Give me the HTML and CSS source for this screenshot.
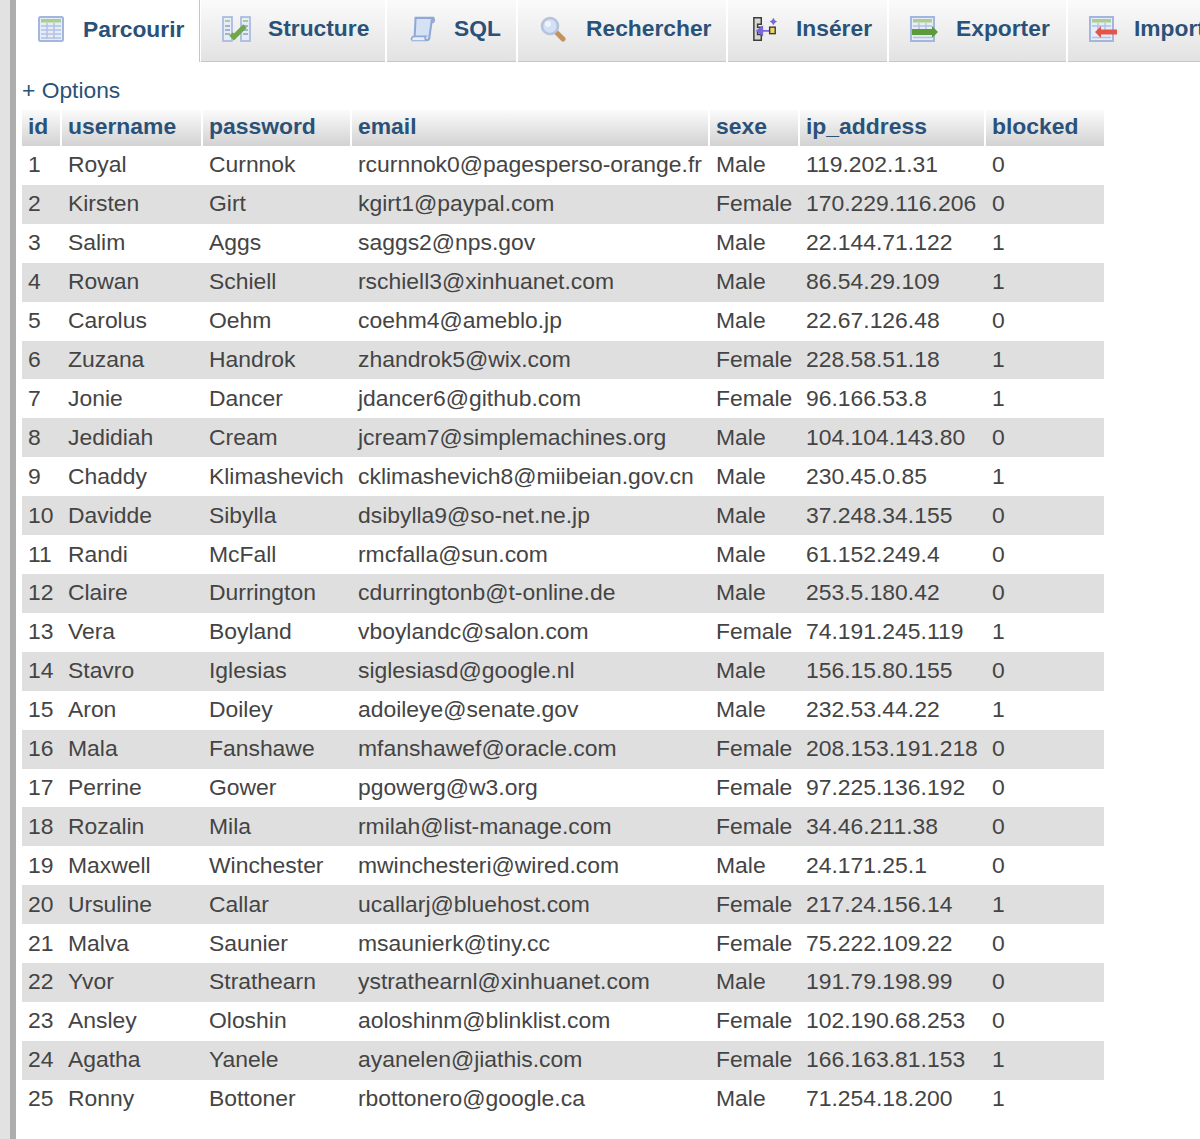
FILE: index.html
```html
<!DOCTYPE html>
<html lang="fr">
<head>
<meta charset="utf-8">
<title>phpMyAdmin - Parcourir</title>
<link rel="stylesheet" href="styles.css">
</head>
<body>
<div class="page">
  <aside class="side"></aside>
  <main class="main">
    <nav class="tabs">
      <a class="tab active">
        <svg class="ico" viewBox="0 0 26 26"><rect x="1" y="1" width="24" height="24" rx="1.5" fill="#e6ecf8" stroke="#a3b6de" stroke-width="2"/><rect x="3" y="3" width="20" height="3.500" fill="#a9cf8e"/><path d="M3 10h20M3 14h20M3 18h20M3 22h20M9 7v16M16 7v16" stroke="#b3c1e2" stroke-width="1.500" fill="none"/></svg>
        <span>Parcourir</span>
      </a>
      <a class="tab t-structure">
        <svg class="ico i-29" viewBox="0 0 29 26"><rect x="1" y="1" width="9" height="24" fill="#e6ecf8" stroke="#a3b6de" stroke-width="1.600"/><rect x="19" y="1" width="9" height="24" fill="#e6ecf8" stroke="#a3b6de" stroke-width="1.600"/><path d="M3 5h5M21 5h5" stroke="#a9cf8e" stroke-width="2.200"/><path d="M3 10h5M3 14h5M3 18h5M21 10h5M21 14h5M21 18h5" stroke="#8f9fc2" stroke-width="1.300"/><path d="M9 18l3 3 11-11" stroke="#6fa848" stroke-width="5" fill="none"/></svg>
        <span>Structure</span>
      </a>
      <a class="tab t-sql">
        <svg class="ico i-28" viewBox="0 0 28 28"><path d="M6 2h20c-2 1-3 3-3 6l-2 14c0 2-1 4-3 4H2c2-1 3-2 3-4z" fill="#d5e1f5" stroke="#8fa9d4" stroke-width="2.200"/><path d="M2 26c-1-2 0-4 3-4h12c-1 1-1 3 0 4" fill="#e8effa" stroke="#8fa9d4" stroke-width="1.800"/><path d="M21 3c2-1 5-1 5 1s-1 3-3 3" fill="none" stroke="#8fa9d4" stroke-width="2"/></svg>
        <span>SQL</span>
      </a>
      <a class="tab t-search">
        <svg class="ico" viewBox="0 0 26 26"><path d="M15 15l8 8" stroke="#c4935a" stroke-width="5" stroke-linecap="round"/><circle cx="10" cy="10" r="8" fill="#d3e0f6" stroke="#b4c4dc" stroke-width="2.600"/><circle cx="8" cy="8" r="3" fill="#eef3fc"/></svg>
        <span>Rechercher</span>
      </a>
      <a class="tab t-insert">
        <svg class="ico" viewBox="0 0 26 28"><path d="M1 2h8v7H5v3h4v5H5v3h4v6H1z" fill="#d8d8d4" stroke="#3d3d38" stroke-width="1.600"/><path d="M18 12v3h-7v-5l-8 6 8 6v-5h7v1z" fill="#7667dc"/><rect x="18" y="12" width="6" height="7" fill="#f0d565" stroke="#3d3d38" stroke-width="1.500"/><path d="M22 2l1.500 2.500L26 6l-2.500 1.500L22 10l-1.500-2.500L18 6l2.500-1.500z" fill="#7667dc"/></svg>
        <span>Insérer</span>
      </a>
      <a class="tab t-export">
        <svg class="ico i-28" viewBox="0 0 28 26"><rect x="1" y="1" width="23" height="24" fill="#e6ecf8" stroke="#a3b6de" stroke-width="2"/><rect x="3" y="3" width="19" height="3.500" fill="#a9cf8e"/><path d="M3 10h19M9 7v9M16 7v9M3 21.500h19" stroke="#b3c1e2" stroke-width="1.400"/><path d="M2 13h20v-3l6 6-6 6v-3H2z" fill="#5d9a3c"/></svg>
        <span>Exporter</span>
      </a>
      <a class="tab t-import">
        <svg class="ico i-28" viewBox="0 0 28 26"><rect x="1" y="1" width="23" height="24" fill="#e6ecf8" stroke="#a3b6de" stroke-width="2"/><rect x="3" y="3" width="19" height="3.500" fill="#a9cf8e"/><path d="M3 10h19M9 7v10M16 7v10M3 21.500h19" stroke="#b3c1e2" stroke-width="1.400"/><path d="M28 13.500H12V10l-6 6 6 6v-3.500h16z" fill="#e2554a"/></svg>
        <span>Importer</span>
      </a>
    </nav>
    <a class="options">+ Options</a>
    <table class="data">
      <colgroup>
        <col class="c-id"><col class="c-user"><col class="c-pass"><col class="c-mail"><col class="c-sex"><col class="c-ip"><col class="c-block">
      </colgroup>
      <thead>
        <tr><th>id</th><th>username</th><th>password</th><th>email</th><th>sexe</th><th>ip_address</th><th>blocked</th></tr>
      </thead>
      <tbody>
        <tr><td>1</td><td>Royal</td><td>Curnnok</td><td>rcurnnok0@pagesperso-orange.fr</td><td>Male</td><td>119.202.1.31</td><td>0</td></tr>
        <tr><td>2</td><td>Kirsten</td><td>Girt</td><td>kgirt1@paypal.com</td><td>Female</td><td>170.229.116.206</td><td>0</td></tr>
        <tr><td>3</td><td>Salim</td><td>Aggs</td><td>saggs2@nps.gov</td><td>Male</td><td>22.144.71.122</td><td>1</td></tr>
        <tr><td>4</td><td>Rowan</td><td>Schiell</td><td>rschiell3@xinhuanet.com</td><td>Male</td><td>86.54.29.109</td><td>1</td></tr>
        <tr><td>5</td><td>Carolus</td><td>Oehm</td><td>coehm4@ameblo.jp</td><td>Male</td><td>22.67.126.48</td><td>0</td></tr>
        <tr><td>6</td><td>Zuzana</td><td>Handrok</td><td>zhandrok5@wix.com</td><td>Female</td><td>228.58.51.18</td><td>1</td></tr>
        <tr><td>7</td><td>Jonie</td><td>Dancer</td><td>jdancer6@github.com</td><td>Female</td><td>96.166.53.8</td><td>1</td></tr>
        <tr><td>8</td><td>Jedidiah</td><td>Cream</td><td>jcream7@simplemachines.org</td><td>Male</td><td>104.104.143.80</td><td>0</td></tr>
        <tr><td>9</td><td>Chaddy</td><td>Klimashevich</td><td>cklimashevich8@miibeian.gov.cn</td><td>Male</td><td>230.45.0.85</td><td>1</td></tr>
        <tr><td>10</td><td>Davidde</td><td>Sibylla</td><td>dsibylla9@so-net.ne.jp</td><td>Male</td><td>37.248.34.155</td><td>0</td></tr>
        <tr><td>11</td><td>Randi</td><td>McFall</td><td>rmcfalla@sun.com</td><td>Male</td><td>61.152.249.4</td><td>0</td></tr>
        <tr><td>12</td><td>Claire</td><td>Durrington</td><td>cdurringtonb@t-online.de</td><td>Male</td><td>253.5.180.42</td><td>0</td></tr>
        <tr><td>13</td><td>Vera</td><td>Boyland</td><td>vboylandc@salon.com</td><td>Female</td><td>74.191.245.119</td><td>1</td></tr>
        <tr><td>14</td><td>Stavro</td><td>Iglesias</td><td>siglesiasd@google.nl</td><td>Male</td><td>156.15.80.155</td><td>0</td></tr>
        <tr><td>15</td><td>Aron</td><td>Doiley</td><td>adoileye@senate.gov</td><td>Male</td><td>232.53.44.22</td><td>1</td></tr>
        <tr><td>16</td><td>Mala</td><td>Fanshawe</td><td>mfanshawef@oracle.com</td><td>Female</td><td>208.153.191.218</td><td>0</td></tr>
        <tr><td>17</td><td>Perrine</td><td>Gower</td><td>pgowerg@w3.org</td><td>Female</td><td>97.225.136.192</td><td>0</td></tr>
        <tr><td>18</td><td>Rozalin</td><td>Mila</td><td>rmilah@list-manage.com</td><td>Female</td><td>34.46.211.38</td><td>0</td></tr>
        <tr><td>19</td><td>Maxwell</td><td>Winchester</td><td>mwinchesteri@wired.com</td><td>Male</td><td>24.171.25.1</td><td>0</td></tr>
        <tr><td>20</td><td>Ursuline</td><td>Callar</td><td>ucallarj@bluehost.com</td><td>Female</td><td>217.24.156.14</td><td>1</td></tr>
        <tr><td>21</td><td>Malva</td><td>Saunier</td><td>msaunierk@tiny.cc</td><td>Female</td><td>75.222.109.22</td><td>0</td></tr>
        <tr><td>22</td><td>Yvor</td><td>Strathearn</td><td>ystrathearnl@xinhuanet.com</td><td>Male</td><td>191.79.198.99</td><td>0</td></tr>
        <tr><td>23</td><td>Ansley</td><td>Oloshin</td><td>aoloshinm@blinklist.com</td><td>Female</td><td>102.190.68.253</td><td>0</td></tr>
        <tr><td>24</td><td>Agatha</td><td>Yanele</td><td>ayanelen@jiathis.com</td><td>Female</td><td>166.163.81.153</td><td>1</td></tr>
        <tr><td>25</td><td>Ronny</td><td>Bottoner</td><td>rbottonero@google.ca</td><td>Male</td><td>71.254.18.200</td><td>1</td></tr>
      </tbody>
    </table>
  </main>
</div>
</body>
</html>
```
FILE: styles.css
```css
html, body {
  margin: 0;
  height: 100%;
  overflow: hidden;
  background: #fff;
}
body {
  font-family: "Liberation Sans", Arial, sans-serif;
  color: #444;
}
.page {
  display: flex;
  height: 1139px;
}
.side {
  width: 16px;
  flex: none;
  background: #e2e2e2;
  border-right: 6px solid #adadad;
  box-sizing: border-box;
}
.main {
  flex: 1;
  min-width: 0;
  overflow: hidden;
}
.tabs {
  display: flex;
  height: 62px;
  gap: 2px;
  white-space: nowrap;
  margin-left: 1px;
}
.tab {
  display: flex;
  align-items: center;
  flex: none;
  box-sizing: border-box;
  height: 62px;
  padding: 0 0 4px 21px;
  gap: 20px;
  font-size: 22.8px;
  font-weight: bold;
  color: #2a5279;
  background: linear-gradient(#fbfbfb, #e2e2e2);
  border-bottom: 1px solid #c6c6c6;
}
.tab.active {
  width: 182px;
  gap: 19px;
  background: #fff;
  border-bottom: 0;
  box-shadow: 1px 0 0 #c6c6c6;
}
.t-structure { width: 184px; gap: 17px; }
.t-sql { width: 129px; padding-left: 22px; gap: 17px; }
.t-search { width: 208px; padding-left: 22px; }
.t-insert { width: 159px; padding-left: 24px; gap: 18px; }
.t-export { width: 177px; gap: 18px; }
.t-import { width: 160px; gap: 17px; }
.ico {
  width: 26px;
  height: 26px;
  flex: none;
  filter: blur(0.4px);
}
.ico.i-28 { width: 28px; }
.ico.i-29 { width: 29px; }
.options {
  display: block;
  margin: 14px 0 0 6px;
  font-size: 22.8px;
  line-height: 28px;
  color: #2a5279;
}
.data {
  table-layout: fixed;
  width: 1082px;
  margin: 6px 0 0 6px;
  border-collapse: separate;
  border-spacing: 0;
  font-size: 22.9px;
}
.c-id { width: 40px; }
.c-user { width: 141px; }
.c-pass { width: 149px; }
.c-mail { width: 358px; }
.c-sex { width: 90px; }
.c-ip { width: 186px; }
.c-block { width: 118px; }
.data th {
  box-sizing: border-box;
  height: 36px;
  padding: 0 0 4px 6px;
  text-align: left;
  font-weight: bold;
  color: #2a5279;
  background: linear-gradient(#fbfbfb, #d2d2d2) padding-box;
  border-right: 2px solid #fff;
  line-height: 28px;
}
.data th:last-child {
  border-right: 0;
}
.data td {
  box-sizing: border-box;
  height: 38.92px;
  padding: 0 0 2px 6px;
  white-space: nowrap;
  color: #444;
  line-height: 28px;
}
.data tbody tr:nth-child(even) td {
  background: #dfdfdf;
}
```
